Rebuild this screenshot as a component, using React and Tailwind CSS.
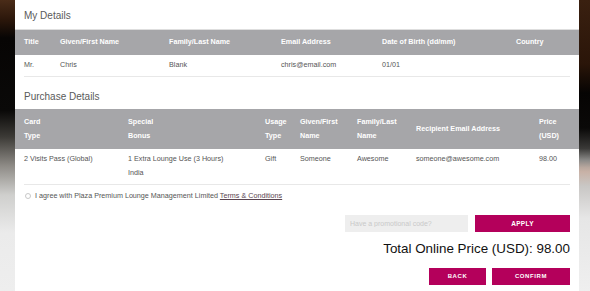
const font = { fontFamily: '"Liberation Sans", Arial, sans-serif' }

const myCols = 'grid-cols-[36px_109px_112px_101px_134px_1fr]'
const buyCols = 'grid-cols-[104px_137px_35px_57px_59px_123px_1fr]'

const myHeader = ['Title', 'Given/First Name', 'Family/Last Name', 'Email Address', 'Date of Birth (dd/mm)', 'Country']
const myRow = ['Mr.', 'Chris', 'Blank', 'chris@email.com', '01/01', '']

const buyHeader = [
  ['Card', 'Type'],
  ['Special', 'Bonus'],
  ['Usage', 'Type'],
  ['Given/First', 'Name'],
  ['Family/Last', 'Name'],
  ['Recipient Email Address'],
  ['Price', '(USD)'],
]
const buyRow = [
  ['2 Visits Pass (Global)'],
  ['1 Extra Lounge Use (3 Hours)', 'India'],
  ['Gift'],
  ['Someone'],
  ['Awesome'],
  ['someone@awesome.com'],
  ['98.00'],
]

export default function App() {
  return (
    <div className="flex h-[291px] w-[590px] overflow-hidden" style={font}>
      <div className="w-[15px] shrink-0 bg-[linear-gradient(to_bottom,#4a2c18_0%,#2a160a_7%,#070504_13%,#0a0908_38%,#3c3a36_47%,#8e8b86_57%,#cfcfcd_67%,#ebebeb_80%,#eeeeee_100%)]" />

      <div className="flex flex-1 flex-col bg-white">
        <div className="h-[29px] px-[9px] pt-[10px] text-[10px] leading-[12px] text-[#5a5a5a]">My Details</div>

        <div className={`grid ${myCols} h-[26px] items-center border-t border-[#dedede] bg-[#a6a6a9] px-[9px] text-[7.2px] font-bold text-white`}>
          {myHeader.map((h) => (
            <div key={h}>{h}</div>
          ))}
        </div>
        <div className={`grid ${myCols} h-[21px] items-center px-[9px] text-[7.2px] text-[#555]`}>
          {myRow.map((c, i) => (
            <div key={i}>{c}</div>
          ))}
        </div>
        <div className="mx-[9px] border-t border-[#e8e8e8]" />

        <div className="h-[32px] px-[9px] pt-[14px] text-[10px] leading-[12px] text-[#5a5a5a]">Purchase Details</div>

        <div className={`grid ${buyCols} h-[40px] items-center bg-[#a6a6a9] px-[9px] text-[7.2px] font-bold leading-[14px] text-white`}>
          {buyHeader.map((lines, i) => (
            <div key={i}>
              {lines.map((l) => (
                <div key={l}>{l}</div>
              ))}
            </div>
          ))}
        </div>
        <div className={`grid ${buyCols} px-[9px] pb-[4px] pt-[3px] text-[7.2px] leading-[14px] text-[#555]`}>
          {buyRow.map((lines, i) => (
            <div key={i}>
              {lines.map((l) => (
                <div key={l}>{l}</div>
              ))}
            </div>
          ))}
        </div>
        <div className="mx-[9px] border-t border-[#e8e8e8]" />

        <label className="flex items-center gap-[4px] px-[9px] pt-[4px] text-[7.2px] leading-[14px] text-[#555]">
          <span className="ml-[1px] h-[6px] w-[6px] rounded-full border border-[#c8c8c8] bg-white" />
          <span>
            I agree with Plaza Premium Lounge Management Limited{' '}
            <span className="text-[#5a4550] underline">Terms &amp; Conditions</span>
          </span>
        </label>

        <div className="mt-[12px] flex justify-end gap-[7px] px-[9px]">
          <input
            placeholder="Have a promotional code?"
            className="h-[17px] w-[123px] bg-[#eeeeee] px-[5px] text-[7px] text-[#555] outline-none placeholder:text-[#c9c9c9]"
          />
          <button className="h-[17px] w-[95px] bg-[#b4005b] text-[6.5px] font-bold tracking-[0.3px] text-white">APPLY</button>
        </div>

        <div className="mt-[9px] px-[9px] text-right text-[13.4px] leading-[16px] text-[#111]">Total Online Price (USD): 98.00</div>

        <div className="mt-[11px] flex justify-end gap-[6px] px-[9px]">
          <button className="h-[17px] w-[57px] bg-[#b4005b] text-[6px] font-bold tracking-[0.6px] text-white">BACK</button>
          <button className="h-[17px] w-[78px] bg-[#b4005b] text-[6px] font-bold tracking-[0.6px] text-white">CONFIRM</button>
        </div>
      </div>

      <div className="w-[11px] shrink-0 bg-[linear-gradient(to_bottom,#3a2010_0%,#2a1509_22%,#060403_32%,#0a0908_44%,#3a3937_51%,#8a8987_55%,#b8a79e_57.5%,#c8b1a6_59%,#c9c7c5_64%,#e6e6e6_75%,#efefef_100%)]" />
    </div>
  )
}
